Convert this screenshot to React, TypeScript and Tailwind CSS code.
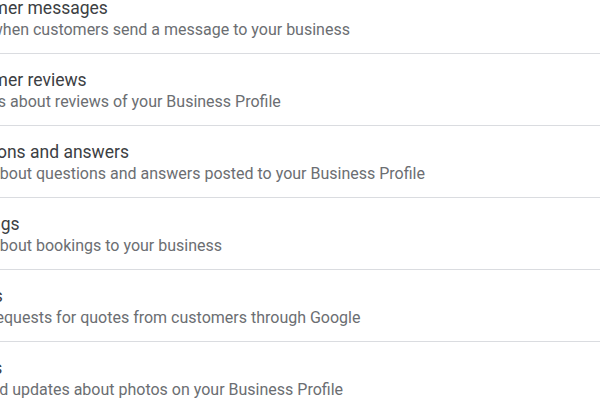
import React from 'react';

const settings = [
  { title: 'Customer messages', desc: 'Know when customers send a message to your business' },
  { title: 'Customer reviews', desc: 'Updates about reviews of your Business Profile' },
  { title: 'Questions and answers', desc: 'News about questions and answers posted to your Business Profile' },
  { title: 'Bookings', desc: 'News about bookings to your business' },
  { title: 'Quotes', desc: 'Track requests for quotes from customers through Google' },
  { title: 'Photos', desc: 'Tips and updates about photos on your Business Profile' },
];

const App = () => {
  return (
    <div
      className="w-[600px] h-[400px] overflow-hidden bg-white"
      style={{ fontFamily: 'Roboto, "Noto Sans", sans-serif' }}
    >
      <ul className="-mt-[18px]">
        {settings.map((s) => (
          <li key={s.title} className="h-[72px] border-b border-[#dadce0] pt-[14px]">
            <div className="-ml-[53px] whitespace-nowrap">
              <div className="text-[17.5px] leading-[24px] text-[#3c4043]">{s.title}</div>
              <div className="text-[16px] leading-[20px] text-[#6b6e72]">{s.desc}</div>
            </div>
          </li>
        ))}
      </ul>
    </div>
  );
};

export default App;
